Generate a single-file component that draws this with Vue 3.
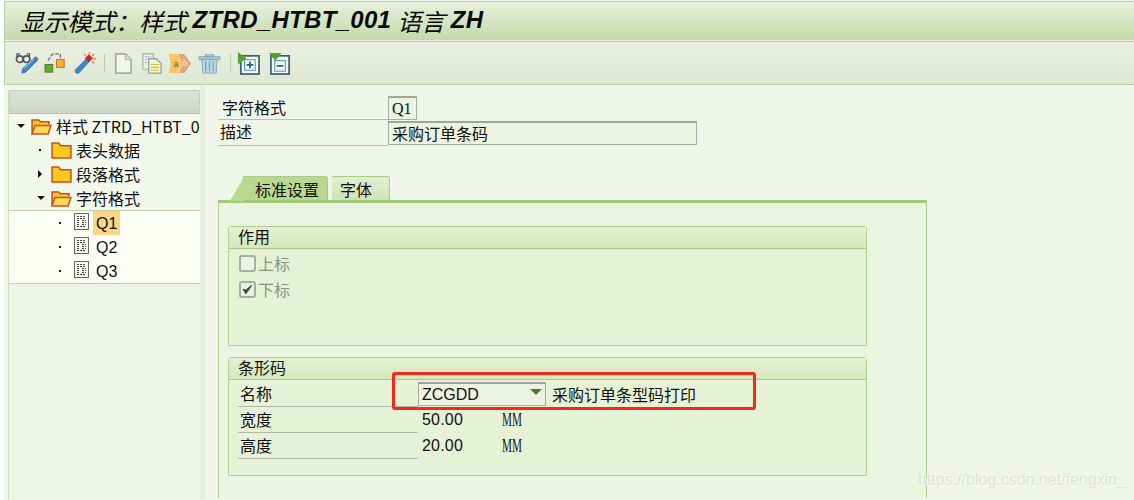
<script setup>
const treeTop = [
  { label: '表头数据', mark: 'dot', open: false },
  { label: '段落格式', mark: 'right', open: false },
  { label: '字符格式', mark: 'down', open: true }
]
const treeLeaves = ['Q1', 'Q2', 'Q3']
</script>

<template>
  <div class="page">
    <div class="title">
      <span class="title-cjk">显示模式：样式</span>
      <span class="title-latin">ZTRD_HTBT_001</span>
      <span class="title-cjk">语言</span>
      <span class="title-latin">ZH</span>
    </div>

    <div class="toolbar">
      <svg class="tool" viewBox="0 0 24 24">
        <circle cx="2.800" cy="7.500" r="3.400" fill="#eef2e6" stroke="#555" stroke-width="1.700" />
        <circle cx="10" cy="7.500" r="3.400" fill="#eef2e6" stroke="#555" stroke-width="1.700" />
        <path d="M0 6V2h3M13 6V2h-3" fill="none" stroke="#555" stroke-width="1.300" />
        <path d="M5 22l1-5L18 6c1-1 2-1 3 0s1 2 0 3L9 21z" fill="#3f86c4" stroke="#2a6ca6" stroke-width="0.800" />
        <path d="M7 17L18 7" stroke="#8cc0e6" stroke-width="1.200" />
      </svg>
      <svg class="tool" viewBox="0 0 24 24">
        <rect x="-1" y="13" width="8" height="8" fill="#6aa62e" stroke="#4b7a1e" />
        <rect x="11" y="8" width="8" height="8" fill="#f9b428" stroke="#d0653a" />
        <path d="M2 9l4-6 2-1h7v4" fill="none" stroke="#777" stroke-width="1.400" stroke-dasharray="4 1.500" />
      </svg>
      <svg class="tool" viewBox="0 0 24 24">
        <path d="M1 22l-1-3L12 7l3 3L4 22z" fill="#3f86c4" stroke="#2a6ca6" stroke-width="0.800" />
        <rect x="11.500" y="3.500" width="6" height="6" fill="#d8232a" transform="rotate(45 14.500 6.500)" />
        <path d="M15 0v2M22 7h-3M20 2l-2 2M20 12l-2-2M10 2l1 2" stroke="#f08a24" stroke-width="1.500" />
      </svg>
      <span class="sep"></span>
      <svg class="tool" viewBox="0 0 24 24">
        <path d="M5 2h10l6 6v14H5z" fill="#f2f5ea" stroke="#a9aca4" stroke-width="1.800" />
        <path d="M15 2v6h6" fill="#dcdfd6" stroke="#a9aca4" />
      </svg>
      <svg class="tool" viewBox="0 0 24 24">
        <path d="M3 2h11v16H3z" fill="#eef1e8" stroke="#a9aca4" stroke-width="1.200" />
        <path d="M5 5h7M5 8h3M5 11h3" stroke="#b5b8b0" />
        <path d="M9 7h8l5 5v10H9z" fill="#fbf3c8" stroke="#88a8bc" stroke-width="1.400" />
        <path d="M11 13h9M11 16h9M11 19h9" stroke="#d8b848" stroke-width="1.200" />
      </svg>
      <svg class="tool" viewBox="0 0 24 24">
        <path d="M0 2h8l7 10-7 10H0l2-10z" fill="#f2c65e" />
        <path d="M10 2h6l7 10-7 10h-6l5-10-5-8z" fill="#dea67a" />
        <text x="5" y="16" class="ab-letter">a</text>
        <text x="14.500" y="15" class="ab-letter light">b</text>
      </svg>
      <svg class="tool" viewBox="0 0 24 24">
        <path d="M8 3h8v2H8z" fill="none" stroke="#7fa9bd" stroke-width="1.500" />
        <path d="M1 5h22v3H1z" fill="#a5c6d6" stroke="#7fa9bd" />
        <path d="M4 8h16l-1 14H5z" fill="#bfd8e3" stroke="#7fa9bd" />
        <path d="M8 10v10M12 10v10M16 10v10" stroke="#7fa9bd" stroke-width="1.600" />
      </svg>
      <span class="sep second"></span>
      <svg class="tool" viewBox="0 0 24 24">
        <rect x="4" y="4" width="19" height="19" fill="#f4f7ee" stroke="#3f5f72" stroke-width="1.800" />
        <path d="M1 0l9 6.500-9 6.500z" fill="#5aa02c" />
        <rect x="8" y="8" width="11" height="11" fill="none" stroke="#3f8fc4" />
        <path d="M13.500 10v7M10 13.500h7" stroke="#1f5f92" stroke-width="1.800" />
      </svg>
      <svg class="tool last" viewBox="0 0 24 24">
        <rect x="2" y="4" width="19" height="19" fill="#f4f7ee" stroke="#3f5f72" stroke-width="1.800" />
        <path d="M0 1h13l-6.500 8z" fill="#5aa02c" />
        <rect x="6" y="9" width="11" height="11" fill="none" stroke="#3f8fc4" />
        <path d="M8 14.500h7" stroke="#1f5f92" stroke-width="1.800" />
      </svg>
    </div>

    <div class="body">
      <aside class="tree">
        <div class="tree-head"></div>
        <div class="tree-group">
          <div class="tree-row root">
            <i class="mark down"></i>
            <svg class="folder" viewBox="0 0 22 18">
              <path d="M1 17V2h7l2 2h9v3" fill="#ffc81e" stroke="#c8501e" stroke-width="1.600" />
              <path d="M1 17l3-9h17l-3 9z" fill="#ffd95a" stroke="#c8501e" stroke-width="1.600" />
            </svg>
            <span class="root-label">样式 ZTRD_HTBT_0</span>
          </div>
          <div v-for="item in treeTop" :key="item.label" class="tree-row child">
            <i class="mark" :class="item.mark"></i>
            <svg class="folder" viewBox="0 0 22 18">
              <template v-if="item.open">
                <path d="M1 17V2h7l2 2h9v3" fill="#ffc81e" stroke="#c8501e" stroke-width="1.600" />
                <path d="M1 17l3-9h17l-3 9z" fill="#ffd95a" stroke="#c8501e" stroke-width="1.600" />
              </template>
              <path v-else d="M1 17V1h7l2 3h11v13z" fill="#ffc81e" stroke="#c8501e" stroke-width="1.600" />
            </svg>
            <span>{{ item.label }}</span>
          </div>
        </div>
        <div class="tree-leaves">
          <div v-for="(leaf, i) in treeLeaves" :key="leaf" class="tree-row leaf">
            <i class="mark dot"></i>
            <svg class="doc" viewBox="0 0 15 17">
              <rect x="0.500" y="0.500" width="14" height="16" fill="#f6f8f2" stroke="#666" />
              <path d="M3 3.500h9M3 5.500h9M3 7.500h3M8 7.500h4M3 9.500h3M8 9.500h4M3 11.500h3M8 11.500h4M3 13.500h9" stroke="#444" stroke-dasharray="2 1" />
            </svg>
            <span class="leaf-label" :class="{ selected: i === 0 }">{{ leaf }}</span>
          </div>
        </div>
      </aside>

      <div class="splitter"></div>

      <main class="main">
        <div class="field-row first">
          <label class="field-label">字符格式</label>
          <span class="input serif short">Q1</span>
        </div>
        <div class="field-row">
          <label class="field-label tight">描述</label>
          <span class="input wide">采购订单条码</span>
        </div>

        <div class="tabs">
          <div class="tab active"><span>标准设置</span></div>
          <div class="tab"><span>字体</span></div>
        </div>

        <section class="tab-panel">
          <div class="group effect">
            <div class="group-head">作用</div>
            <div class="group-body">
              <div class="check-row">
                <span class="check"></span>
                <span>上标</span>
              </div>
              <div class="check-row">
                <span class="check">
                  <svg viewBox="0 0 16 16">
                    <path d="M3 8l3 5 7-10-7 6z" fill="#2f4f36" stroke="#2f4f36" stroke-width="1.400" />
                  </svg>
                </span>
                <span>下标</span>
              </div>
            </div>
          </div>

          <div class="group barcode">
            <div class="group-head">条形码</div>
            <div class="group-body">
              <div class="bar-row">
                <span class="bar-label">名称</span>
                <span class="select">ZCGDD<i class="select-arrow"></i></span>
                <span class="select-text">采购订单条型码打印</span>
              </div>
              <div class="bar-row">
                <span class="bar-label">宽度</span>
                <span class="value">50.00</span>
                <span class="unit">MM</span>
              </div>
              <div class="bar-row">
                <span class="bar-label">高度</span>
                <span class="value">20.00</span>
                <span class="unit">MM</span>
              </div>
            </div>
          </div>
        </section>
      </main>
    </div>

    <div class="callout"></div>
    <div class="watermark">https://blog.csdn.net/fengxin_</div>
  </div>
</template>

<style>
html, body {
  margin: 0;
  overflow: hidden;
}
</style>

<style scoped>
.page {
  position: relative;
  width: 1134px;
  height: 500px;
  overflow: hidden;
  box-sizing: border-box;
  border-left: 4px solid #fff;
  background: #f0f5ea;
  font-family: "Noto Sans CJK SC", "Liberation Sans", sans-serif;
  font-size: 16px;
  color: #111;
}

.title {
  height: 40px;
  margin-top: 1px;
  box-sizing: border-box;
  display: flex;
  align-items: center;
  gap: 6px;
  padding-left: 15px;
  padding-bottom: 2px;
  border-top: 1px solid #b9cda5;
  border-left: 1px solid #b9cda5;
  border-bottom: 1px solid #eef3e6;
  background: linear-gradient(#e8efdc, #c5d9ab);
  font-style: italic;
  font-size: 24px;
  color: #0a0a0a;
}
.title-cjk {
  letter-spacing: -0.2px;
}
.title-latin {
  font-family: "Liberation Sans", sans-serif;
  font-weight: 700;
  letter-spacing: 0.3px;
}

.toolbar {
  height: 44px;
  box-sizing: border-box;
  display: flex;
  align-items: center;
  padding-left: 12px;
  gap: 6px;
  border-left: 1px solid #b9cda5;
  border-top: 1px solid #b9cda5;
  border-bottom: 1px solid #bccfab;
  background: linear-gradient(#e9f0e0, #dfe8d3);
}
.tool {
  width: 23px;
  height: 23px;
  flex: none;
  overflow: visible;
}
.tool.last {
  margin-left: 3px;
}
.ab-letter {
  font-family: "Liberation Sans", sans-serif;
  font-size: 9px;
  fill: #7a5a2a;
}
.ab-letter.light {
  fill: #f5e6d2;
}
.sep {
  width: 1px;
  height: 18px;
  background: #b4cf9c;
}
.sep.second {
  margin-left: 3px;
}

.body {
  display: flex;
  height: 414px;
}

.tree {
  width: 192px;
  flex: none;
  margin: 5px 0 0 4px;
  background: #eff5e6;
  border-left: 1px solid #cfe0bd;
  box-sizing: border-box;
}
.tree-head {
  height: 24px;
  box-sizing: border-box;
  background: linear-gradient(#dce1d6, #cfd6c9);
  border: 1px solid #c7cfc0;
  border-bottom: 1px solid #b3c79e;
}
.tree-group {
  background: #f3f8ec;
  border-bottom: 1px solid #bdd2a8;
}
.tree-row {
  display: flex;
  align-items: center;
  height: 24px;
  white-space: nowrap;
  overflow: hidden;
}
.root {
  padding-left: 8px;
}
.root .folder {
  margin-left: 8px;
}
.root-label {
  margin-left: 4px;
}
.child {
  padding-left: 28px;
}
.child .folder {
  margin-left: 8px;
}
.child span {
  margin-left: 4px;
}
.folder {
  width: 21px;
  height: 17px;
  flex: none;
}
.mark {
  width: 6px;
  height: 8px;
  flex: none;
  position: relative;
}
.mark.dot::after {
  content: "";
  position: absolute;
  left: 2px;
  top: 3px;
  width: 2px;
  height: 2px;
  background: #222;
}
.mark.down::after {
  content: "";
  position: absolute;
  left: 0;
  top: 2px;
  border: 4px solid transparent;
  border-top: 4px solid #111;
  border-bottom: 0;
}
.mark.right::after {
  content: "";
  position: absolute;
  left: 1px;
  top: 0;
  border: 4px solid transparent;
  border-left: 4px solid #111;
  border-right: 0;
}

.tree-leaves {
  background: #fbfff6;
  border-bottom: 1px solid #bdd2a8;
}
.leaf {
  padding-left: 48px;
  font-family: "Liberation Sans", sans-serif;
}
.doc {
  width: 15px;
  height: 17px;
  margin: -3px 0 0 11px;
  flex: none;
}
.leaf-label {
  margin-left: 4px;
  padding: 2px 3px 0 2px;
  line-height: 22px;
  text-indent: 1px;
}
.selected {
  background: #fdd684;
}

.splitter {
  width: 5px;
  flex: none;
  background: #e6eedd;
}

.main {
  flex: 1;
  padding: 11px 0 0 13px;
  min-width: 0;
}
.field-row {
  display: flex;
  align-items: center;
  height: 26px;
}
.first {
  height: 24px;
}
.field-label {
  width: 170px;
  height: 100%;
  box-sizing: border-box;
  padding-left: 4px;
  line-height: 23px;
  border-bottom: 1px solid #b9bdb4;
}
.field-label.tight {
  padding-left: 2px;
}
.input {
  display: block;
  box-sizing: border-box;
  height: 24px;
  line-height: 21px;
  padding-left: 3px;
  border: 1px solid #a8aba6;
  border-top: 2px solid #a0a39e;
  background: #ecf3e0;
}
.serif {
  font-family: "Liberation Serif", serif;
}
.short {
  width: 29px;
}
.wide {
  width: 309px;
}

.tabs {
  display: flex;
  margin-top: 30px;
  height: 24px;
  padding-left: 25px;
  gap: 1px;
}
.tab {
  position: relative;
  height: 24px;
  box-sizing: border-box;
  padding: 0 17px 0 8px;
  margin-left: 3px;
  line-height: 24px;
  background: linear-gradient(#e3eed2, #cfe3b6);
  border: 1px solid #a8cc85;
  border-bottom: 0;
  border-left: 0;
  border-radius: 0 3px 0 0;
}
.tab::before {
  content: "";
  position: absolute;
  left: -3px;
  top: -1px;
  bottom: 0;
  width: 8px;
  background: #dbe9c6;
  border-left: 1px solid #a8cc85;
  border-top: 1px solid #a8cc85;
  transform: skewX(-22deg);
  z-index: -1;
}
.tab.active {
  background: #b8d98f;
  padding: 0 8px 0 12px;
  margin-left: 0;
  border-left: 0;
  z-index: 1;
}
.tab.active::before {
  left: -13px;
  top: 0;
  width: 0;
  height: 0;
  background: none;
  border: 0;
  border-bottom: 24px solid #b8d98f;
  border-left: 14px solid transparent;
  transform: none;
  z-index: 0;
}
.tab-panel {
  height: 298px;
  width: 709px;
  box-sizing: border-box;
  border-top: 3px solid #9fc87a;
  border-left: 1px solid #a8d088;
  border-right: 1px solid #a8d088;
  background: #ebf4df;
  padding: 23px 0 0 9px;
}

.group {
  width: 639px;
  box-sizing: border-box;
  border: 1px solid #b0d090;
  border-radius: 3px 3px 0 0;
  background: #e6f2d5;
}
.group-head {
  height: 22px;
  line-height: 19px;
  box-sizing: border-box;
  padding-left: 9px;
  background: linear-gradient(#e4efd3, #d5e7bc);
  border-bottom: 1px solid #a8c98a;
}
.effect {
  height: 120px;
}
.barcode {
  height: 119px;
  margin-top: 11px;
}

.check-row {
  display: flex;
  align-items: center;
  height: 26px;
  padding-left: 10px;
  color: #8a9484;
}
.effect .group-body {
  padding-top: 1px;
}
.check {
  display: flex;
  width: 17px;
  height: 17px;
  box-sizing: border-box;
  border: 2px solid #a8ada4;
  border-radius: 3px;
  background: #eaf2e0;
  margin-right: 2px;
}
.check svg {
  width: 13px;
  height: 13px;
}

.barcode .group-body {
  padding-top: 1px;
}
.bar-row {
  display: flex;
  align-items: center;
  height: 26px;
}
.bar-label {
  width: 180px;
  height: 100%;
  margin-left: 9px;
  padding-left: 2px;
  box-sizing: border-box;
  line-height: 25px;
  border-bottom: 1px solid #b3b8ad;
}
.select {
  position: relative;
  display: block;
  box-sizing: border-box;
  width: 128px;
  height: 24px;
  line-height: 21px;
  padding-left: 3px;
  font-family: "Liberation Sans", sans-serif;
  border: 1px solid #a8aba6;
  border-top: 2px solid #a0a39e;
  background: #ecf3e0;
}
.select-arrow {
  position: absolute;
  right: 3px;
  top: 5px;
  border: 6px solid transparent;
  border-top: 6px solid #4f7a34;
  border-bottom: 0;
}
.select-text {
  margin-left: 6px;
}
.value {
  width: 80px;
  padding-left: 4px;
  font-family: "Liberation Sans", sans-serif;
  letter-spacing: 0.2px;
}
.unit {
  display: inline-block;
  width: 30px;
  font-family: "Liberation Serif", serif;
  font-size: 18px;
  transform: scaleX(0.62);
  transform-origin: left center;
}

.callout {
  position: absolute;
  left: 388px;
  top: 372px;
  width: 364px;
  height: 38px;
  box-sizing: border-box;
  border: 3px solid #f5261a;
  border-radius: 3px;
}
.watermark {
  position: absolute;
  left: 914px;
  top: 471px;
  font-family: "Liberation Sans", sans-serif;
  font-size: 16px;
  color: #dde3d8;
  text-shadow: 1px 1px 1px #f8faf5;
  white-space: nowrap;
}
</style>
